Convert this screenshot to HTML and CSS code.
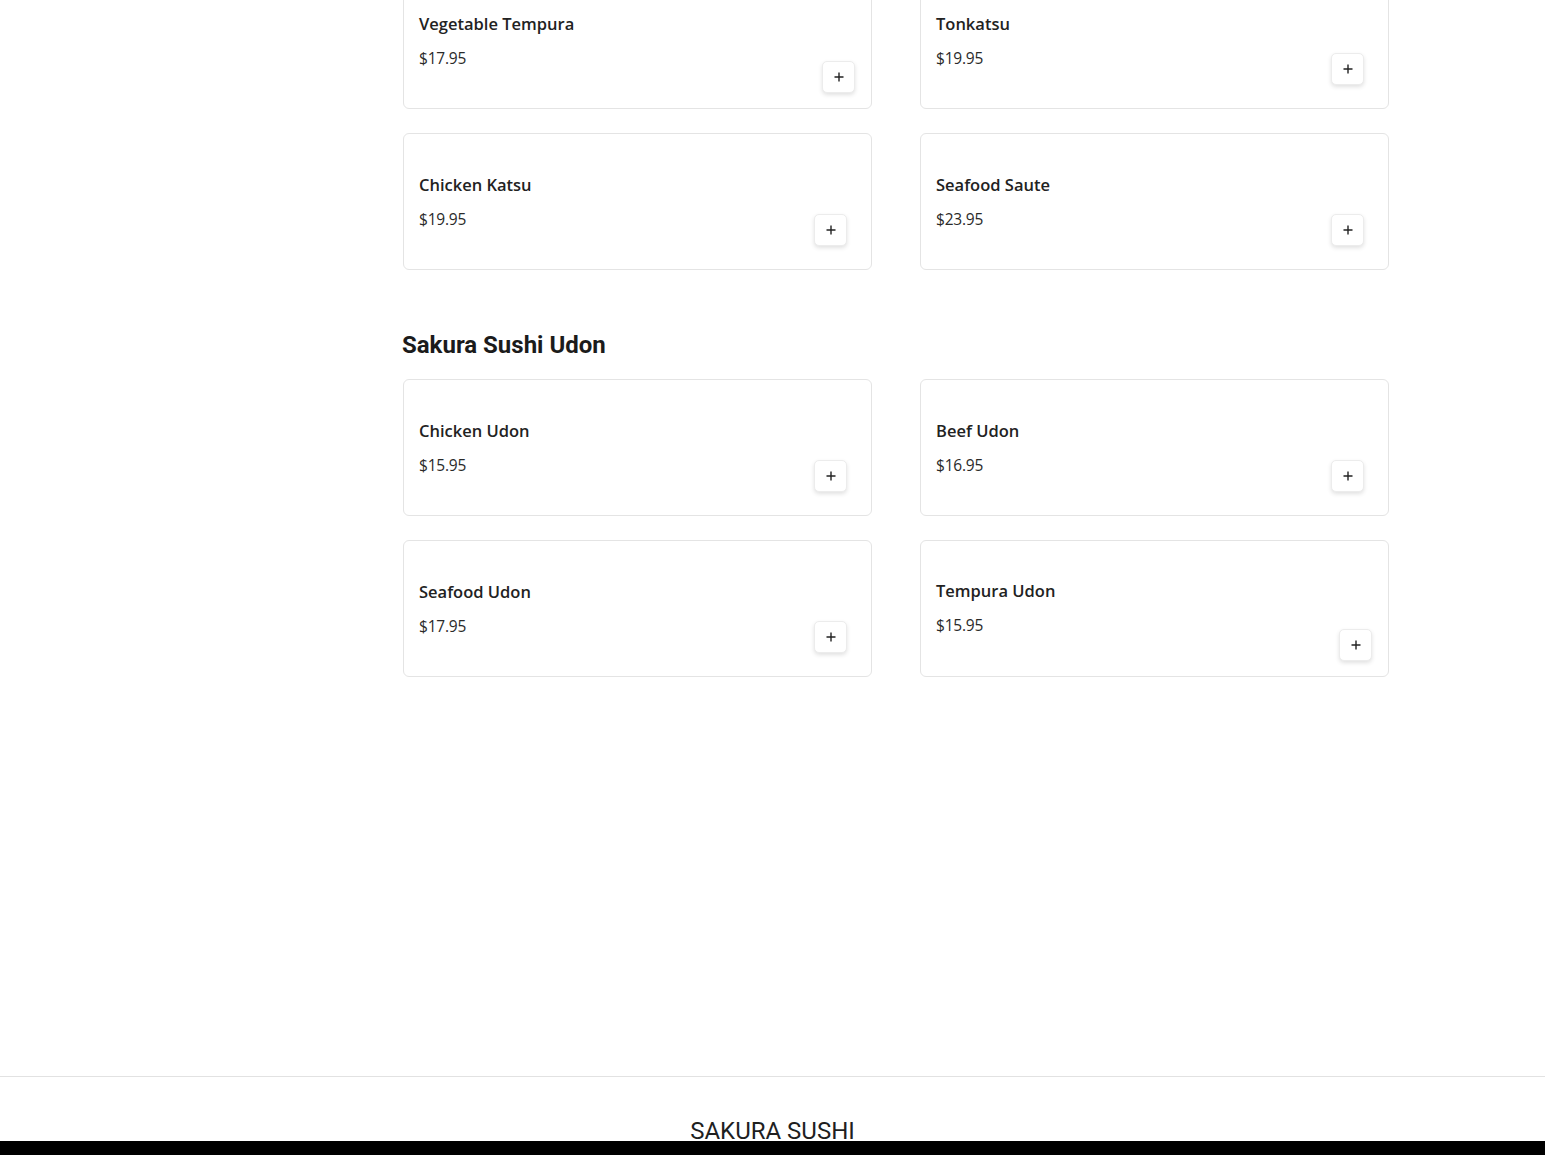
FILE: index.html
```html
<!DOCTYPE html>
<html lang="en">
<head>
<meta charset="utf-8">
<title>Sakura Sushi Menu</title>
<link rel="stylesheet" href="styles.css">
</head>
<body>
<div class="page">
  <aside class="sidebar"></aside>
  <main class="menu">
    <section class="section section-first">
      <div class="grid">
        <div class="card">
          <div class="info"><div class="name">Vegetable Tempura</div><div class="price">$17.95</div></div>
          <button class="add add-wide" type="button"><svg viewBox="0 0 12 12" width="12" height="12"><path d="M6 1.5v9M1.5 6h9" stroke="#222" stroke-width="1.4" fill="none"/></svg></button>
        </div>
        <div class="card">
          <div class="info"><div class="name">Tonkatsu</div><div class="price">$19.95</div></div>
          <button class="add" type="button"><svg viewBox="0 0 12 12" width="12" height="12"><path d="M6 1.5v9M1.5 6h9" stroke="#222" stroke-width="1.4" fill="none"/></svg></button>
        </div>
        <div class="card">
          <div class="info"><div class="name">Chicken Katsu</div><div class="price">$19.95</div></div>
          <button class="add" type="button"><svg viewBox="0 0 12 12" width="12" height="12"><path d="M6 1.5v9M1.5 6h9" stroke="#222" stroke-width="1.4" fill="none"/></svg></button>
        </div>
        <div class="card">
          <div class="info"><div class="name">Seafood Saute</div><div class="price">$23.95</div></div>
          <button class="add" type="button"><svg viewBox="0 0 12 12" width="12" height="12"><path d="M6 1.5v9M1.5 6h9" stroke="#222" stroke-width="1.4" fill="none"/></svg></button>
        </div>
      </div>
    </section>
    <section class="section">
      <h2 class="section-title">Sakura Sushi Udon</h2>
      <div class="grid">
        <div class="card">
          <div class="info"><div class="name">Chicken Udon</div><div class="price">$15.95</div></div>
          <button class="add" type="button"><svg viewBox="0 0 12 12" width="12" height="12"><path d="M6 1.5v9M1.5 6h9" stroke="#222" stroke-width="1.4" fill="none"/></svg></button>
        </div>
        <div class="card">
          <div class="info"><div class="name">Beef Udon</div><div class="price">$16.95</div></div>
          <button class="add" type="button"><svg viewBox="0 0 12 12" width="12" height="12"><path d="M6 1.5v9M1.5 6h9" stroke="#222" stroke-width="1.4" fill="none"/></svg></button>
        </div>
        <div class="card">
          <div class="info"><div class="name">Seafood Udon</div><div class="price">$17.95</div></div>
          <button class="add" type="button"><svg viewBox="0 0 12 12" width="12" height="12"><path d="M6 1.5v9M1.5 6h9" stroke="#222" stroke-width="1.4" fill="none"/></svg></button>
        </div>
        <div class="card">
          <div class="info info-up"><div class="name">Tempura Udon</div><div class="price">$15.95</div></div>
          <button class="add add-wide" type="button"><svg viewBox="0 0 12 12" width="12" height="12"><path d="M6 1.5v9M1.5 6h9" stroke="#222" stroke-width="1.4" fill="none"/></svg></button>
        </div>
      </div>
    </section>
  </main>
</div>
<footer class="footer">
  <div class="brand">SAKURA SUSHI</div>
</footer>
<div class="bottom-bar"></div>
</body>
</html>
```

FILE: styles.css
```css
* { box-sizing: border-box; }
html, body { margin: 0; padding: 0; background: #fff; }
body {
  font-family: "Open Sans", "Noto Sans", sans-serif;
  color: #1b1b1b;
}
.page {
  display: flex;
  min-height: 1076px;
}
.sidebar {
  width: 403px;
  flex: 0 0 403px;
}
.menu {
  width: 986px;
  margin-top: -28px;
}
.section + .section { margin-top: 60px; }
.section-title {
  font-family: Roboto, "Liberation Sans", sans-serif;
  font-weight: 700;
  font-size: 24px;
  line-height: 28px;
  padding-top: 1px;
  margin: 0 0 20px -1px;
  color: #1b1b1b;
}
.grid {
  display: grid;
  grid-template-columns: 469px 469px;
  column-gap: 48px;
  row-gap: 24px;
}
.card {
  height: 137px;
  border: 1px solid #e4e4e4;
  border-radius: 6px;
  padding: 16px 16px 16px 15px;
  display: flex;
  justify-content: space-between;
  align-items: flex-end;
  background: #fff;
}
.info {
  align-self: flex-start;
  padding-top: 23px;
}
.info-up { padding-top: 22px; }
.name {
  font-size: 16.5px;
  line-height: 24px;
  font-weight: 600;
  color: #222;
  letter-spacing: 0;
}
.price {
  margin-top: 10px;
  font-size: 15.5px;
  line-height: 24px;
  color: #2a2a2a;
  letter-spacing: -0.2px;
}
.add {
  width: 33px;
  height: 32px;
  margin: 0 8px 7px 0;
  padding: 0;
  border: 1px solid #ececec;
  border-radius: 5px;
  background: #fff;
  box-shadow: 0 2px 4px rgba(0,0,0,0.12);
  display: flex;
  align-items: center;
  justify-content: center;
  cursor: pointer;
}
.add svg { display: block; }
.add-wide { margin: 0 0 -1px 0; }
.footer {
  border-top: 1px solid #e2e2e2;
  padding: 40px 0 40px;
  text-align: center;
}
.brand {
  font-family: Roboto, "Liberation Sans", sans-serif;
  font-size: 24px;
  line-height: 28px;
  color: #1f1f1f;
}
.bottom-bar {
  position: fixed;
  left: 0;
  right: 0;
  bottom: 0;
  height: 14px;
  background: #000;
}
```
